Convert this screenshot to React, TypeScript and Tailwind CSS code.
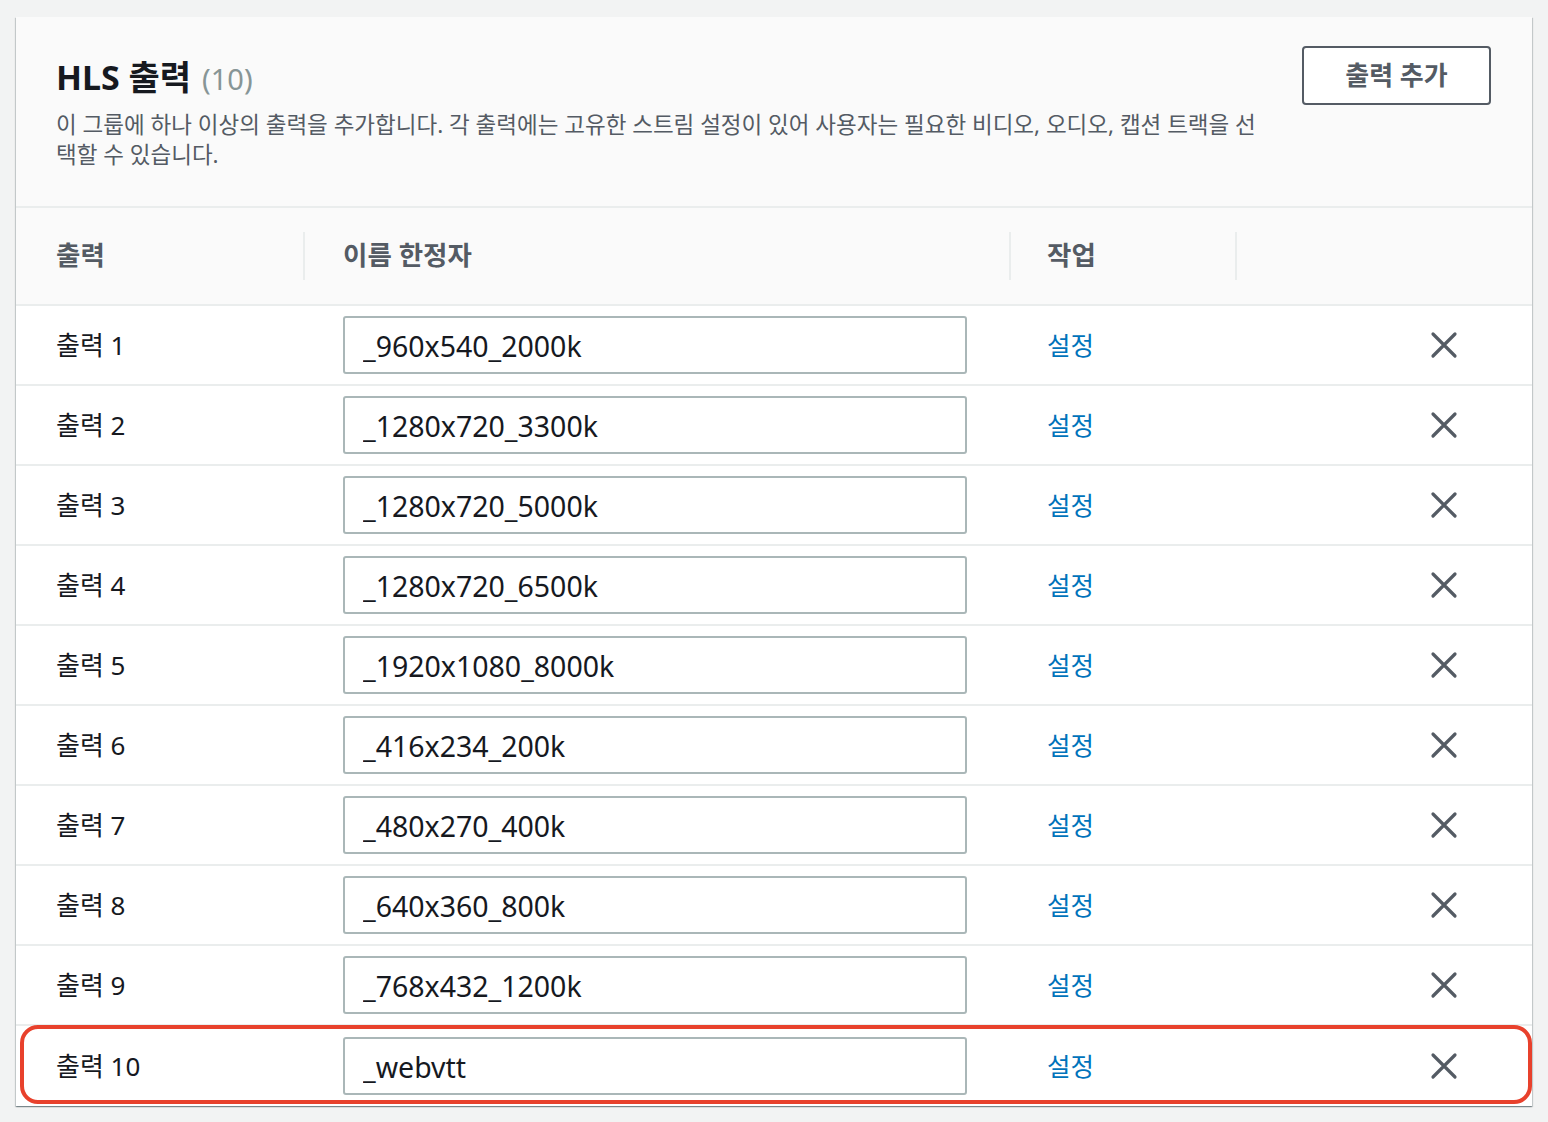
import React from "react";

type Output = { id: number; modifier: string };

const outputs: Output[] = [
  { id: 1, modifier: "_960x540_2000k" },
  { id: 2, modifier: "_1280x720_3300k" },
  { id: 3, modifier: "_1280x720_5000k" },
  { id: 4, modifier: "_1280x720_6500k" },
  { id: 5, modifier: "_1920x1080_8000k" },
  { id: 6, modifier: "_416x234_200k" },
  { id: 7, modifier: "_480x270_400k" },
  { id: 8, modifier: "_640x360_800k" },
  { id: 9, modifier: "_768x432_1200k" },
  { id: 10, modifier: "_webvtt" },
];

const font = "font-['Noto_Sans','Noto_Sans_CJK_KR',sans-serif]";

function CloseIcon() {
  return (
    <svg width="28" height="28" viewBox="0 0 28 28" fill="none">
      <path d="M3 3L25 25M25 3L3 25" stroke="#545b64" strokeWidth="3.2" strokeLinecap="round" />
    </svg>
  );
}

function Divider() {
  return <div className="w-[2px] h-[48px] bg-[#eaeded]" />;
}

export default function App() {
  return (
    <div className={`min-h-screen bg-[#f2f3f3] pt-[17px] pl-[16px] ${font}`}>
      <div className="w-[1516px] bg-white shadow-[0_1px_1px_0_rgba(0,28,36,0.3),1px_1px_1px_0_rgba(0,28,36,0.15),-1px_1px_1px_0_rgba(0,28,36,0.15)]">
        {/* cabecera */}
        <div className="h-[191px] bg-[#fafafa] border-b-2 border-[#eaeded] flex justify-between pl-[40px] pr-[41px]">
          <div className="pt-[40px]">
            <h2 className="text-[34px] leading-[40px] font-bold text-[#16191f]">
              HLS 출력 <span className="font-normal text-[#879596] text-[29px] ml-[2px]">(10)</span>
            </h2>
            <p className="mt-[11px] w-[1214px] text-[22.5px] leading-[30px] text-[#545b64]">
              이 그룹에 하나 이상의 출력을 추가합니다. 각 출력에는 고유한 스트림 설정이 있어 사용자는 필요한 비디오, 오디오, 캡션 트랙을 선택할 수 있습니다.
            </p>
          </div>
          <div className="pt-[29px]">
            <button className="w-[189px] h-[59px] border-2 border-[#545b64] rounded-[4px] bg-white text-[26px] font-bold text-[#545b64]">
              출력 추가
            </button>
          </div>
        </div>

        {/* encabezado de tabla */}
        <div className="grid grid-cols-[287px_706px_226px_1fr] h-[98px] bg-[#fafafa] border-b-2 border-[#eaeded] items-center text-[26.5px] font-bold text-[#545b64]">
          <div className="pl-[40px]">출력</div>
          <div className="flex items-center">
            <Divider />
            <span className="pl-[38px]">이름 한정자</span>
          </div>
          <div className="flex items-center">
            <Divider />
            <span className="pl-[36px]">작업</span>
          </div>
          <div className="flex items-center">
            <Divider />
          </div>
        </div>

        {/* filas */}
        {outputs.map((o, i) => (
          <div
            key={o.id}
            className={`relative grid grid-cols-[287px_706px_226px_1fr] h-[80px] items-center ${
              i < outputs.length - 1 ? "border-b-2 border-[#eaeded]" : ""
            }`}
          >
            <div className="pl-[40px] text-[26px] text-[#16191f]">출력 {o.id}</div>
            <div className="pl-[40px] pr-[42px]">
              <input
                readOnly
                value={o.modifier}
                className={`w-full h-[58px] border-2 border-[#aab7b8] rounded-[3px] bg-white pl-[18px] pt-[2px] text-[28.5px] text-[#16191f] outline-none ${font}`}
              />
            </div>
            <div className="pl-[38px]">
              <a className="text-[25.5px] text-[#0073bb] cursor-pointer">설정</a>
            </div>
            <div className="flex justify-end pr-[74px]">
              <CloseIcon />
            </div>
            {o.id === 10 && (
              <div className="absolute left-[4px] right-0 top-[-1px] bottom-[2px] border-[4px] border-[#e8412c] rounded-[18px] pointer-events-none" />
            )}
          </div>
        ))}
      </div>
    </div>
  );
}
